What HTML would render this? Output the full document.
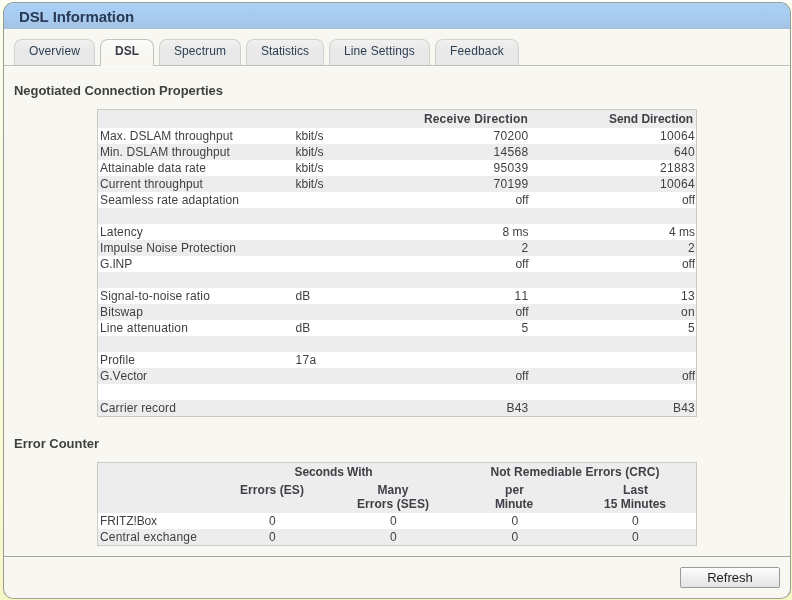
<!DOCTYPE html>
<html><head><meta charset="utf-8">
<style>
html,body{margin:0;padding:0}
body{width:792px;height:600px;overflow:hidden;background:linear-gradient(#fbfdf0,#fafcdc 35%,#f9fad2 80%,#f7f7c6);font-family:"Liberation Sans",sans-serif;position:relative;color:#3f3f3f;font-kerning:none}
div{box-sizing:border-box}
.a{position:absolute;white-space:nowrap}
.t{position:absolute;font-size:12px;line-height:16px;white-space:nowrap;color:#3f3f3f}
.b{font-weight:bold;color:#404048}
.r{text-align:right}
.c{text-align:center}
.g{background:#ededed}
.tab{position:absolute;top:39px;height:26px;border:1px solid #d2d2cc;border-bottom:none;border-radius:8px 8px 0 0;background:linear-gradient(#f1f1f0,#e9e9e9 40%,#e8e8e8);font-size:12px;color:#2f4055;text-align:center;line-height:14px;padding-top:4px;white-space:nowrap}
.tab.act{background:linear-gradient(#fcfcfa,#f8f7f2 50%);border-color:#c4c4bf;font-weight:bold;color:#3a3a48;height:27px;z-index:2}
.h2{position:absolute;margin:0;font-size:13px;font-weight:bold;color:#3f3f3f;line-height:16px;white-space:nowrap}
</style></head><body>

<div id="wrap" style="position:absolute;left:0;top:0;width:792px;height:600px;will-change:transform">
<div class="a" style="left:0;top:0;width:792px;height:1px;background:#f9fdf0"></div>
<div class="a" style="left:0;top:1px;width:792px;height:1px;background:#ffffff"></div>
<div class="a" style="left:3px;top:2px;width:788px;height:597px;border:1px solid #949b90;border-top-color:#8d9c9e;border-bottom-color:#9fa68e;border-radius:11px 11px 10px 10px;background:#f8f7f2;overflow:hidden">
<div class="a" style="left:0;top:0;width:786px;height:26px;background:linear-gradient(#b4d3ee 0px,#aacff5 3px,#a8cbf0 14px,#a5c5e8 22px,#a6c0da 26px)"></div>
<div class="a" style="left:0;top:26px;width:786px;height:1px;background:#f5fcfb"></div>
<div class="a" style="left:15px;top:5px;font-size:15px;font-weight:bold;color:#293a55;line-height:18px;letter-spacing:-0.111px;">DSL Information</div>
</div>
<div class="a" style="left:4px;top:65px;width:786px;height:1px;background:#bfbfb8"></div>
<div class="a" style="left:4px;top:66px;width:786px;height:1px;background:#fcfcf8"></div>
<div class="tab" style="left:14px;width:81px;letter-spacing:0.124px;">Overview</div>
<div class="tab act" style="left:100px;width:54px;letter-spacing:0.000px;">DSL</div>
<div class="tab" style="left:159px;width:82px;letter-spacing:0.081px;">Spectrum</div>
<div class="tab" style="left:246px;width:78px;letter-spacing:-0.001px;">Statistics</div>
<div class="tab" style="left:329px;width:101px;letter-spacing:0.125px;">Line Settings</div>
<div class="tab" style="left:435px;width:84px;letter-spacing:0.163px;">Feedback</div>
<div class="h2" style="left:14px;top:83px;letter-spacing:-0.037px;">Negotiated Connection Properties</div>
<div class="a" style="left:97px;top:109px;width:600px;height:308px;border:1px solid #cbcbc4;background:#fff"></div>
<div class="a g" style="left:98px;top:110px;width:598px;height:18px"></div>
<div class="t b r" style="left:0;width:528px;top:111px;letter-spacing:0.2px">Receive Direction</div>
<div class="t b r" style="left:0;width:693.0px;top:111px;letter-spacing:-0.049px;">Send Direction</div>
<div class="t" style="left:100.0px;top:128px;letter-spacing:0.076px;">Max. DSLAM throughput</div>
<div class="t" style="left:295.5px;top:128px;letter-spacing:-0.001px;">kbit/s</div>
<div class="t r" style="left:0;width:528.5px;top:128px;letter-spacing:0.326px;">70200</div>
<div class="t r" style="left:0;width:695.0px;top:128px;letter-spacing:0.326px;">10064</div>
<div class="a g" style="left:98px;top:144px;width:598px;height:16px"></div>
<div class="t" style="left:100.0px;top:144px;letter-spacing:0.092px;">Min. DSLAM throughput</div>
<div class="t" style="left:295.5px;top:144px;letter-spacing:-0.001px;">kbit/s</div>
<div class="t r" style="left:0;width:528.5px;top:144px;letter-spacing:0.326px;">14568</div>
<div class="t r" style="left:0;width:695.0px;top:144px;letter-spacing:0.326px;">640</div>
<div class="t" style="left:100.0px;top:160px;letter-spacing:0.096px;">Attainable data rate</div>
<div class="t" style="left:295.5px;top:160px;letter-spacing:-0.001px;">kbit/s</div>
<div class="t r" style="left:0;width:528.5px;top:160px;letter-spacing:0.326px;">95039</div>
<div class="t r" style="left:0;width:695.0px;top:160px;letter-spacing:0.326px;">21883</div>
<div class="a g" style="left:98px;top:176px;width:598px;height:16px"></div>
<div class="t" style="left:100.0px;top:176px;letter-spacing:0.126px;">Current throughput</div>
<div class="t" style="left:295.5px;top:176px;letter-spacing:-0.001px;">kbit/s</div>
<div class="t r" style="left:0;width:528.5px;top:176px;letter-spacing:0.326px;">70199</div>
<div class="t r" style="left:0;width:695.0px;top:176px;letter-spacing:0.326px;">10064</div>
<div class="t" style="left:100.0px;top:192px;letter-spacing:0.122px;">Seamless rate adaptation</div>
<div class="t r" style="left:0;width:528.5px;top:192px;letter-spacing:-0.114px;">off</div>
<div class="t r" style="left:0;width:695.0px;top:192px;letter-spacing:-0.114px;">off</div>
<div class="a g" style="left:98px;top:208px;width:598px;height:16px"></div>
<div class="t" style="left:100.0px;top:224px;letter-spacing:0.139px;">Latency</div>
<div class="t r" style="left:0;width:528.5px;top:224px;letter-spacing:-0.001px;">8 ms</div>
<div class="t r" style="left:0;width:695.0px;top:224px;letter-spacing:-0.001px;">4 ms</div>
<div class="a g" style="left:98px;top:240px;width:598px;height:16px"></div>
<div class="t" style="left:100.0px;top:240px;letter-spacing:0.109px;">Impulse Noise Protection</div>
<div class="t r" style="left:0;width:528.5px;top:240px;letter-spacing:0.326px;">2</div>
<div class="t r" style="left:0;width:695.0px;top:240px;letter-spacing:0.326px;">2</div>
<div class="t" style="left:100.0px;top:256px;letter-spacing:-0.134px;">G.INP</div>
<div class="t r" style="left:0;width:528.5px;top:256px;letter-spacing:-0.114px;">off</div>
<div class="t r" style="left:0;width:695.0px;top:256px;letter-spacing:-0.114px;">off</div>
<div class="a g" style="left:98px;top:272px;width:598px;height:16px"></div>
<div class="t" style="left:100.0px;top:288px;letter-spacing:0.156px;">Signal-to-noise ratio</div>
<div class="t" style="left:295.5px;top:288px;letter-spacing:0.161px;">dB</div>
<div class="t r" style="left:0;width:528.5px;top:288px;letter-spacing:0.326px;">11</div>
<div class="t r" style="left:0;width:695.0px;top:288px;letter-spacing:0.326px;">13</div>
<div class="a g" style="left:98px;top:304px;width:598px;height:16px"></div>
<div class="t" style="left:100.0px;top:304px;letter-spacing:0.140px;">Bitswap</div>
<div class="t r" style="left:0;width:528.5px;top:304px;letter-spacing:-0.114px;">off</div>
<div class="t r" style="left:0;width:695.0px;top:304px;letter-spacing:0.326px;">on</div>
<div class="t" style="left:100.0px;top:320px;letter-spacing:0.162px;">Line attenuation</div>
<div class="t" style="left:295.5px;top:320px;letter-spacing:0.161px;">dB</div>
<div class="t r" style="left:0;width:528.5px;top:320px;letter-spacing:0.326px;">5</div>
<div class="t r" style="left:0;width:695.0px;top:320px;letter-spacing:0.326px;">5</div>
<div class="a g" style="left:98px;top:336px;width:598px;height:16px"></div>
<div class="t" style="left:100.0px;top:352px;letter-spacing:0.141px;">Profile</div>
<div class="t" style="left:295.5px;top:352px;letter-spacing:0.326px;">17a</div>
<div class="a g" style="left:98px;top:368px;width:598px;height:16px"></div>
<div class="t" style="left:100.0px;top:368px;letter-spacing:-0.044px;">G.Vector</div>
<div class="t r" style="left:0;width:528.5px;top:368px;letter-spacing:-0.114px;">off</div>
<div class="t r" style="left:0;width:695.0px;top:368px;letter-spacing:-0.114px;">off</div>
<div class="a g" style="left:98px;top:400px;width:598px;height:16px"></div>
<div class="t" style="left:100.0px;top:400px;letter-spacing:0.142px;">Carrier record</div>
<div class="t r" style="left:0;width:528.5px;top:400px;letter-spacing:0.216px;">B43</div>
<div class="t r" style="left:0;width:695.0px;top:400px;letter-spacing:0.216px;">B43</div>
<div class="h2" style="left:14px;top:436px;letter-spacing:-0.018px;">Error Counter</div>
<div class="a" style="left:97px;top:462px;width:600px;height:84px;border:1px solid #cbcbc4;background:#fff"></div>
<div class="a g" style="left:98px;top:463px;width:598px;height:50px"></div>
<div class="t b c" style="left:233.5px;width:200px;top:464px;letter-spacing:-0.111px;">Seconds With</div>
<div class="t b c" style="left:475.0px;width:200px;top:464px;letter-spacing:0.061px;">Not Remediable Errors (CRC)</div>
<div class="t b c" style="left:172.0px;width:200px;top:482px;letter-spacing:0.059px;">Errors (ES)</div>
<div class="t b c" style="left:293.0px;width:200px;top:482px;letter-spacing:0.082px;">Many</div>
<div class="t b c" style="left:293.0px;width:200px;top:496px;letter-spacing:0.054px;">Errors (SES)</div>
<div class="t b c" style="left:414.5px;width:200px;top:482px;letter-spacing:0.109px;">per</div>
<div class="t b c" style="left:414.0px;width:200px;top:496px;letter-spacing:-0.110px;">Minute</div>
<div class="t b c" style="left:535.5px;width:200px;top:482px;letter-spacing:0.082px;">Last</div>
<div class="t b c" style="left:535.0px;width:200px;top:496px;letter-spacing:-0.002px;">15 Minutes</div>
<div class="t" style="left:100.0px;top:513px;letter-spacing:-0.111px;">FRITZ!Box</div>
<div class="t c" style="left:172.5px;width:200px;top:513px;letter-spacing:0.326px;">0</div>
<div class="t c" style="left:293.5px;width:200px;top:513px;letter-spacing:0.326px;">0</div>
<div class="t c" style="left:415.0px;width:200px;top:513px;letter-spacing:0.326px;">0</div>
<div class="t c" style="left:535.5px;width:200px;top:513px;letter-spacing:0.326px;">0</div>
<div class="a g" style="left:98px;top:529px;width:598px;height:16px"></div>
<div class="t" style="left:100.0px;top:529px;letter-spacing:0.184px;">Central exchange</div>
<div class="t c" style="left:172.5px;width:200px;top:529px;letter-spacing:0.326px;">0</div>
<div class="t c" style="left:293.5px;width:200px;top:529px;letter-spacing:0.326px;">0</div>
<div class="t c" style="left:415.0px;width:200px;top:529px;letter-spacing:0.326px;">0</div>
<div class="t c" style="left:535.5px;width:200px;top:529px;letter-spacing:0.326px;">0</div>
<div class="a" style="left:4px;top:556px;width:786px;height:1px;background:#9ea498"></div>
<div class="a" style="left:4px;top:557px;width:786px;height:1px;background:#fcfcf8"></div>
<div class="a" style="left:680px;top:567px;width:100px;height:21px;border:1px solid #9a9a96;border-radius:2px;background:linear-gradient(#fdfdfd,#e3e3e3);font-size:13px;color:#1e1e1e;text-align:center;line-height:19px">Refresh</div>
</div></body></html>
